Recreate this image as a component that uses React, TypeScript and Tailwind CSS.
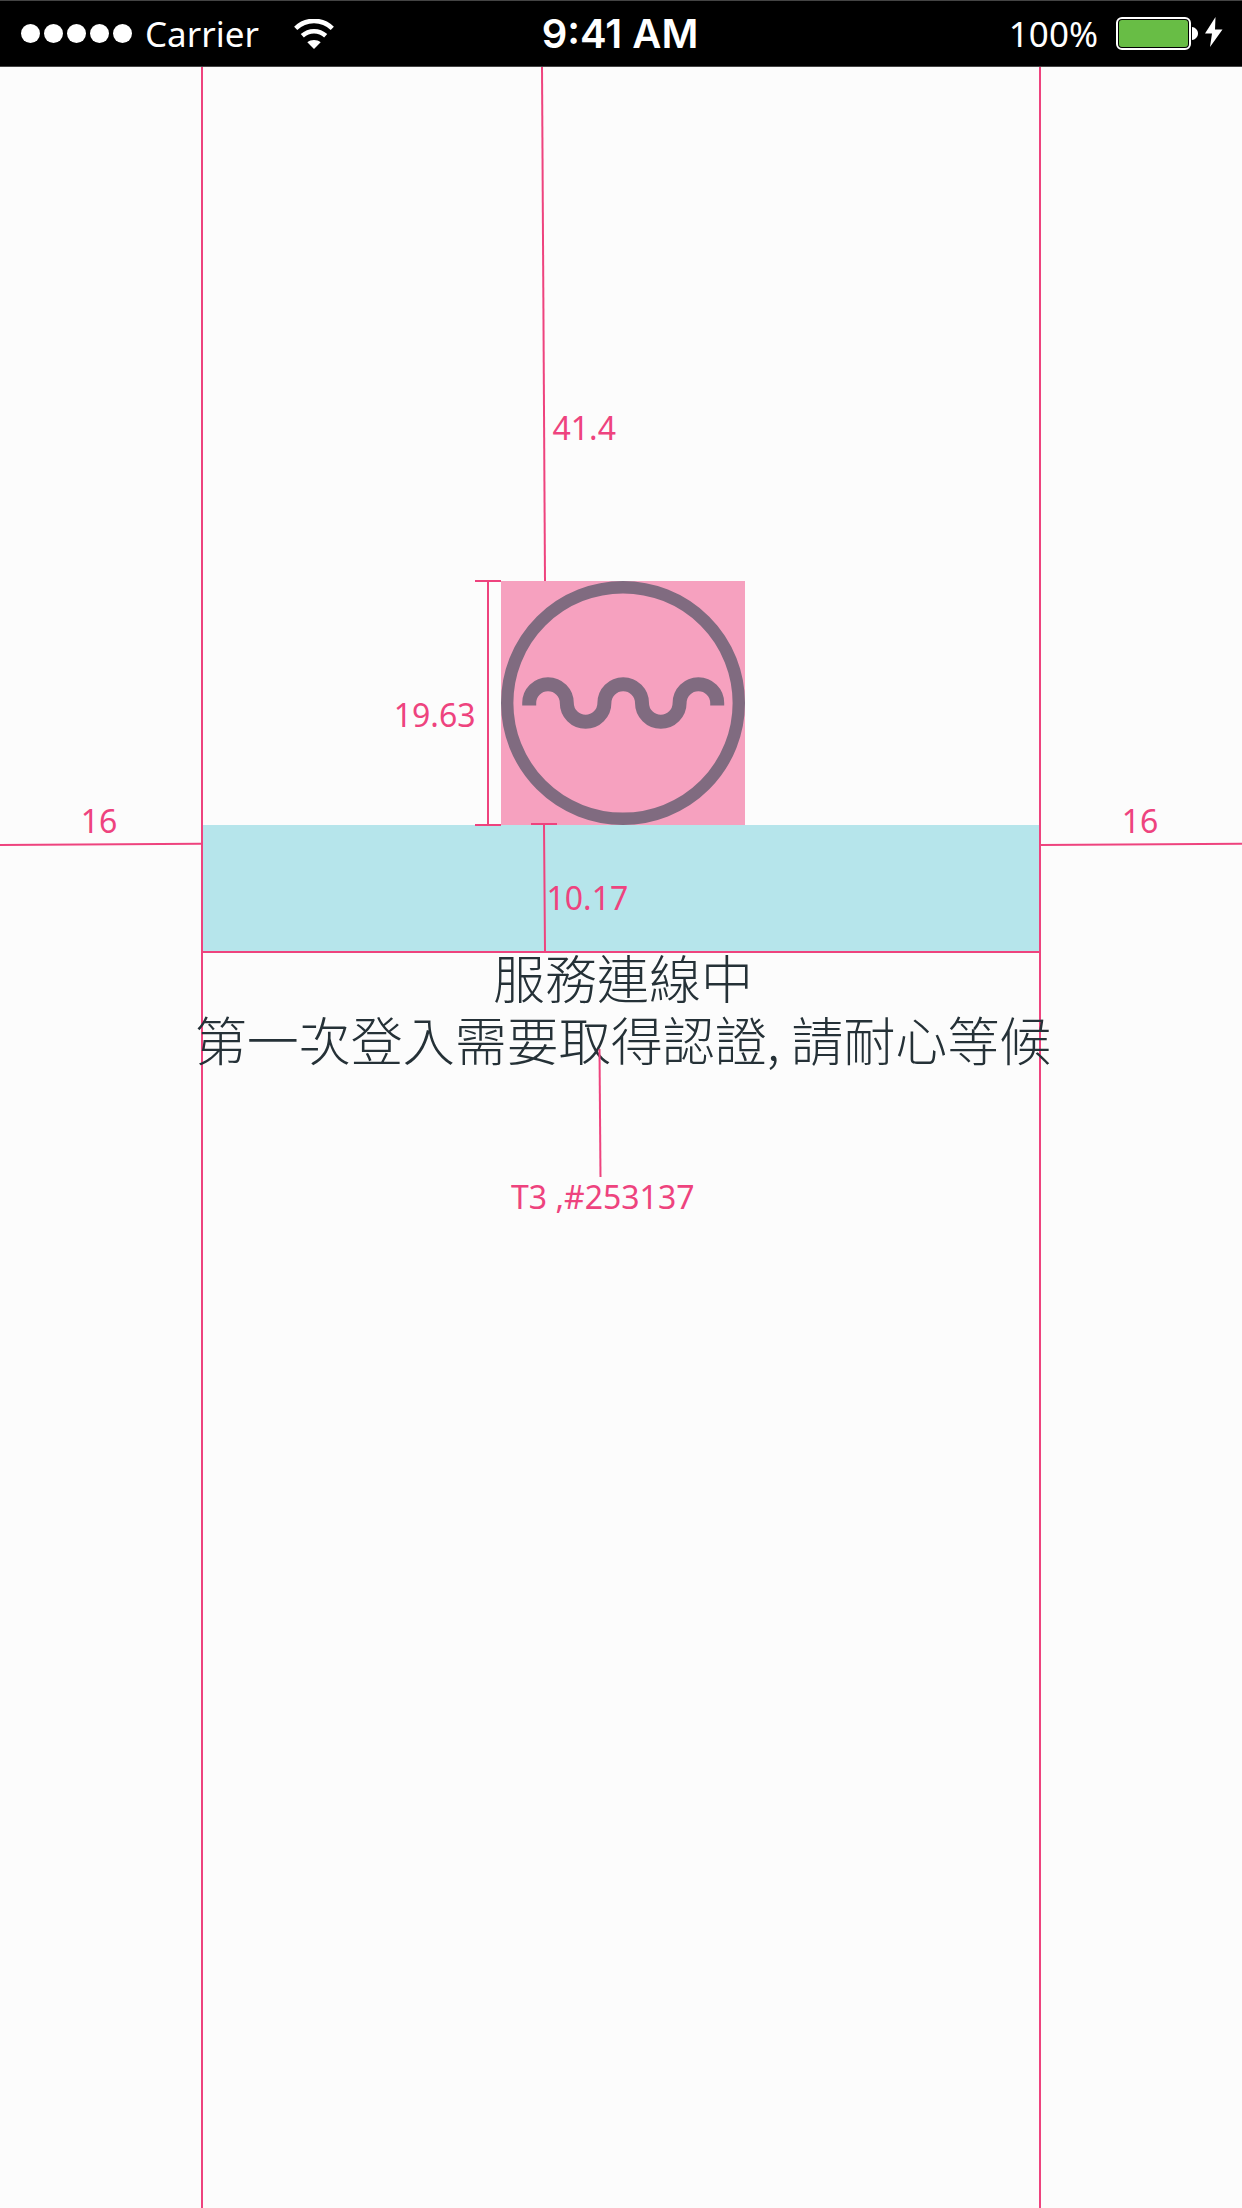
import type { ReactNode } from "react";

const PINK = "#ee437e";

function Label({ children, className = "" }: { children: ReactNode; className?: string }) {
  return (
    <span
      className={`font-['Noto_Sans',sans-serif] text-[32px] leading-[40px] font-normal whitespace-nowrap text-[#ee437e] ${className}`}
    >
      {children}
    </span>
  );
}

function StatusBar() {
  return (
    <header className="grid h-[67px] shrink-0 grid-cols-[1fr_auto_1fr] items-center border-y border-[#444] bg-black pr-[19px] pl-[21px] text-white">
      <div className="flex items-center">
        <div className="flex gap-1" role="img" aria-label="Signal strength">
          {[0, 1, 2, 3, 4].map((dot) => (
            <span key={dot} className="size-[19px] rounded-full bg-white" />
          ))}
        </div>
        <span className="ml-[13px] font-['Noto_Sans',sans-serif] text-[35px] leading-[44px]">Carrier</span>
        <svg className="ml-[35px] h-[30px] w-[40px]" viewBox="0 0 40 30" fill="none" aria-label="Wi-Fi">
          <path d="M1.700 9.300C12-.6 28-.6 38.300 9.300" stroke="#fff" strokeWidth="4.600" />
          <path d="M8.300 16.800C15 10.700 25 10.700 31.700 16.800" stroke="#fff" strokeWidth="4.600" />
          <path d="M13.300 23.200C17 20.200 23 20.200 26.700 23.200L20 30Z" fill="#fff" />
        </svg>
      </div>
      <span className="mr-1 font-['Inter',sans-serif] text-[40px] leading-[44px] font-semibold">9:41 AM</span>
      <div className="flex items-center justify-end">
        <span className="font-['Noto_Sans',sans-serif] text-[35px] leading-[44px]">100%</span>
        <div className="ml-[18px] flex items-center">
          <div className="h-[33px] w-[75px] rounded-[6px] border-2 border-white p-px">
            <div className="h-full rounded-[3px] bg-[#68bd45]" />
          </div>
          <svg className="ml-px h-[13px] w-[6px]" viewBox="0 0 6 13" aria-hidden="true">
            <path d="M0 0C3 0 6 3 6 6.500S3 13 0 13Z" fill="#fff" />
          </svg>
          <svg className="-mt-[3px] ml-[7px] h-[30px] w-[18px]" viewBox="0 0 18 30" aria-label="Charging">
            <path d="M10.500 0 0 16.500H7L5 30 17.500 12.500H10Z" fill="#fff" />
          </svg>
        </div>
      </div>
    </header>
  );
}

function SideMargin() {
  return (
    <aside className="flex flex-col items-center pt-[734px]">
      <Label className="mr-[3px]">16</Label>
      <svg className="mt-px h-1 w-full" viewBox="0 0 201 4" preserveAspectRatio="none" aria-hidden="true">
        <path d="M0 3 201 1.800" stroke={PINK} strokeWidth="2" />
      </svg>
    </aside>
  );
}

function Logo() {
  return (
    <svg className="block size-[244px]" viewBox="0 0 244 244" fill="none" stroke="#806b80" aria-label="Logo">
      <circle cx="122" cy="122" r="115.800" strokeWidth="12.400" />
      <path
        d="M28.200 124.500V122a18.800 18.800 0 0 1 37.600 0a18.800 18.800 0 0 0 37.600 0a18.800 18.800 0 0 1 37.600 0a18.800 18.800 0 0 0 37.600 0a18.800 18.800 0 0 1 37.600 0v2.500"
        strokeWidth="14"
      />
    </svg>
  );
}

export default function App() {
  return (
    <div className="flex min-h-screen flex-col bg-[#fcfcfc]">
      <StatusBar />
      <main className="grid grow grid-cols-[201px_minmax(0,1fr)_201px]">
        <SideMargin />
        <section className="flex flex-col border-x-2 border-[#ee437e]">
          <div className="flex h-[514px] justify-center pl-[3px]">
            <div className="flex w-[244px] pl-[39px]">
              <svg className="h-full w-[6px]" viewBox="0 0 6 514" aria-hidden="true">
                <path d="M2 0 5 514" stroke={PINK} strokeWidth="2" />
              </svg>
              <Label className="mt-[341px] ml-[7px]">41.4</Label>
            </div>
          </div>

          <div className="flex justify-center pl-[3px]">
            <div className="relative w-[244px] bg-[#f6a1bf]">
              <div className="absolute top-0 right-full flex items-center">
                <Label className="mt-6 -mr-px">19.63</Label>
                <svg className="h-[244px] w-[26px] overflow-visible" viewBox="0 0 26 244" aria-hidden="true">
                  <path d="M0 0H26M0 244H26M13 0V244" stroke={PINK} strokeWidth="2" />
                </svg>
              </div>
              <Logo />
            </div>
          </div>

          <div className="flex h-[128px] justify-center border-b-2 border-[#ee437e] bg-[#b6e5eb] pl-[3px]">
            <div className="flex w-[244px] items-center pl-[30px]">
              <svg className="relative h-full w-[26px] overflow-visible" viewBox="0 0 26 126" aria-hidden="true">
                <path d="M0 -1H26M13 0 14 126" stroke={PINK} strokeWidth="2" />
              </svg>
              <Label className="mt-5 -ml-[10px]">10.17</Label>
            </div>
          </div>

          <div className="relative -mx-8">
            <p className="-mt-[7px] pl-1 text-center font-['Noto_Sans_CJK_TC',sans-serif] text-[52px] leading-[62px] font-light whitespace-nowrap text-[#253137]">
              服務連線中
              <br />
              第一次登入需要取得認證, 請耐心等候
            </p>
            <div className="absolute top-24 left-1/2 -ml-[110px] flex flex-col items-center">
              <svg className="-ml-[6px] h-[128px] w-[4px]" viewBox="0 0 4 128" aria-hidden="true">
                <path d="M1.500 0 2.500 128" stroke={PINK} strokeWidth="2" />
              </svg>
              <Label>T3 ,#253137</Label>
            </div>
          </div>
        </section>
        <SideMargin />
      </main>
    </div>
  );
}
